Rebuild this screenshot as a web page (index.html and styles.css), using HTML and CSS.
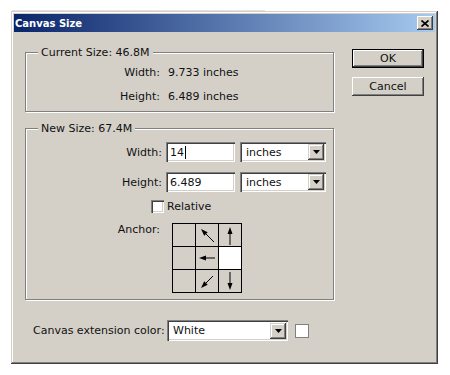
FILE: index.html
```html
<!DOCTYPE html>
<html>
<head>
<meta charset="UTF-8">
<title>Canvas Size</title>
<link rel="stylesheet" href="styles.css">
</head>
<body>
<div class="scrap-line"></div>
<div class="window">
    <div class="title-bar">
        <span class="title">Canvas Size</span>
        <span class="close-btn">
            <svg width="8" height="7" viewBox="0 0 8 7"><path d="M0.5 0.5 L7.5 6.5 M7.5 0.5 L0.5 6.5" stroke="#000" stroke-width="1.7" fill="none"/></svg>
        </span>
    </div>
    <div class="dialog-body">
        <div class="main-col">
            <fieldset class="group current">
                <legend>Current Size: 46.8M</legend>
                <div class="info-row"><span class="lbl">Width:</span><span class="val">9.733 inches</span></div>
                <div class="info-row"><span class="lbl">Height:</span><span class="val">6.489 inches</span></div>
            </fieldset>
            <fieldset class="group new-size">
                <legend>New Size: 67.4M</legend>
                <div class="field-row">
                    <span class="lbl">Width:</span>
                    <div class="textbox">14<span class="caret"></span></div>
                    <div class="combo"><span class="combo-text">inches</span><span class="drop-btn"><svg width="7" height="4" viewBox="0 0 7 4"><polygon points="0,0 7,0 3.5,4" fill="#000"/></svg></span></div>
                </div>
                <div class="field-row">
                    <span class="lbl">Height:</span>
                    <div class="textbox">6.489</div>
                    <div class="combo"><span class="combo-text">inches</span><span class="drop-btn"><svg width="7" height="4" viewBox="0 0 7 4"><polygon points="0,0 7,0 3.5,4" fill="#000"/></svg></span></div>
                </div>
                <div class="check-row"><span class="checkbox"></span><span>Relative</span></div>
                <div class="anchor-row">
                    <span class="lbl">Anchor:</span>
                    <div class="anchor-grid">
                        <div class="cell"></div>
                        <div class="cell"><svg width="22" height="22" viewBox="0 0 22 22"><line x1="18" y1="18" x2="9" y2="9" stroke="#000"/><polygon points="5,5 11.7,8.2 8.2,11.7" fill="#000"/></svg></div>
                        <div class="cell"><svg width="22" height="22" viewBox="0 0 22 22"><line x1="11" y1="21" x2="11" y2="9" stroke="#000"/><polygon points="11,3 8.5,10 13.5,10" fill="#000"/></svg></div>
                        <div class="cell"></div>
                        <div class="cell"><svg width="22" height="22" viewBox="0 0 22 22"><line x1="19" y1="11" x2="9" y2="11" stroke="#000"/><polygon points="3,11 10,8.5 10,13.5" fill="#000"/></svg></div>
                        <div class="cell on"></div>
                        <div class="cell"></div>
                        <div class="cell"><svg width="22" height="22" viewBox="0 0 22 22"><line x1="17" y1="6" x2="9" y2="14" stroke="#000"/><polygon points="5,18 11.7,14.8 8.2,11.3" fill="#000"/></svg></div>
                        <div class="cell"><svg width="22" height="22" viewBox="0 0 22 22"><line x1="11" y1="2" x2="11" y2="14" stroke="#000"/><polygon points="11,20 8.5,13 13.5,13" fill="#000"/></svg></div>
                    </div>
                </div>
            </fieldset>
            <div class="ext-row">
                <span class="ext-label">Canvas extension color:</span>
                <div class="combo wide"><span class="combo-text">White</span><span class="drop-btn"><svg width="7" height="4" viewBox="0 0 7 4"><polygon points="0,0 7,0 3.5,4" fill="#000"/></svg></span></div>
                <span class="swatch"></span>
            </div>
        </div>
        <div class="btn-col">
            <button class="btn default">OK</button>
            <button class="btn">Cancel</button>
        </div>
    </div>
</div>
</body>
</html>
```

FILE: styles.css
```css
body {
    margin: 0;
    padding-top: 10px;
    background-color: #fff;
    font-family: "DejaVu Sans", sans-serif;
    font-size: 11px;
    color: #111;
}
.scrap-line {
    margin-left: 12px;
    width: 253px;
    height: 1px;
    background-color: #e2e2e2;
}
.window {
    margin-left: 11px;
    width: 427px;
    height: 353px;
    box-sizing: border-box;
    padding: 3px;
    background-color: #d4d0c8;
    box-shadow: inset -1px -1px #404040, inset 1px 1px #d4d0c8, inset -2px -2px #808080, inset 2px 2px #fff;
}
.title-bar {
    height: 18px;
    display: flex;
    align-items: center;
    padding-left: 1px;
    background: linear-gradient(to right, #0a246a, #a6caf0);
}
.title {
    color: #fff;
    font-weight: bold;
    font-size: 10px;
}
.close-btn {
    margin-left: auto;
    margin-right: 2px;
    width: 16px;
    height: 14px;
    display: flex;
    align-items: center;
    justify-content: center;
    background-color: #d4d0c8;
    box-shadow: inset -1px -1px #404040, inset 1px 1px #fff, inset -2px -2px #808080;
}
.dialog-body {
    display: flex;
    gap: 18px;
    padding: 14px 11px 0 11px;
}
.main-col {
    width: 309px;
}
.btn-col {
    width: 72px;
    padding-top: 3px;
    display: flex;
    flex-direction: column;
    gap: 9px;
}
.btn {
    height: 19px;
    padding: 0;
    border: none;
    font: inherit;
    color: #111;
    background-color: #d4d0c8;
    box-shadow: inset -1px -1px #404040, inset 1px 1px #fff, inset -2px -2px #808080;
}
.btn.default {
    box-shadow: inset 0 0 0 1px #000, inset -2px -2px #404040, inset 2px 2px #fff, inset -3px -3px #808080;
}

/* group boxes */
.group {
    margin: 0;
    padding: 1px 0 3px 12px;
    min-width: 0;
    border: 1px solid #808080;
    box-shadow: inset 1px 1px #fff, 1px 1px #fff;
}
.group legend {
    padding: 0 3px;
    line-height: 13px;
    background-color: #d4d0c8;
}
.new-size {
    margin-top: 10px;
    padding-top: 7px;
    padding-bottom: 6px;
}
.info-row {
    display: flex;
    align-items: center;
    height: 24px;
}
.info-row .lbl {
    width: 122px;
    text-align: right;
}
.info-row .val {
    margin-left: 8px;
}
.field-row {
    display: flex;
    align-items: center;
    height: 20px;
}
.field-row + .field-row {
    margin-top: 10px;
}
.field-row .lbl {
    width: 124px;
    text-align: right;
}

/* sunken controls */
.textbox, .combo, .checkbox {
    box-sizing: border-box;
    background-color: #fff;
    box-shadow: inset 1px 1px #808080, inset 2px 2px #404040, inset -1px -1px #fff, inset -2px -2px #d4d0c8;
}
.textbox {
    margin-left: 4px;
    width: 69px;
    height: 20px;
    padding-left: 4px;
    display: flex;
    align-items: center;
}
.caret {
    display: inline-block;
    width: 1px;
    height: 13px;
    margin-left: 1px;
    background-color: #000;
}
.combo {
    margin-left: 5px;
    width: 86px;
    height: 20px;
    padding: 2px 2px 2px 6px;
    display: flex;
    align-items: center;
}
.combo-text {
    flex: 1;
}
.drop-btn {
    width: 16px;
    height: 16px;
    display: flex;
    align-items: center;
    justify-content: center;
    background-color: #d4d0c8;
    box-shadow: inset -1px -1px #404040, inset 1px 1px #d4d0c8, inset -2px -2px #808080, inset 2px 2px #fff;
}
.check-row {
    display: flex;
    align-items: center;
    gap: 3px;
    height: 13px;
    margin-top: 8px;
    margin-left: 113px;
}
.checkbox {
    width: 13px;
    height: 13px;
}
.anchor-row {
    display: flex;
    align-items: flex-start;
    margin-top: 10px;
}
.anchor-row .lbl {
    width: 122px;
    text-align: right;
    line-height: 14px;
}
.anchor-grid {
    margin-left: 12px;
    display: grid;
    grid-template-columns: repeat(3, 22px);
    grid-auto-rows: 22px;
    gap: 1px;
    padding: 1px;
    background-color: #000;
}
.cell {
    background-color: #d4d0c8;
}
.cell svg {
    display: block;
}
.cell.on {
    background-color: #fff;
}

/* bottom row */
.ext-row {
    display: flex;
    align-items: center;
    margin-top: 20px;
    margin-left: 8px;
}
.ext-label {
    width: 134px;
}
.combo.wide {
    margin-left: 0;
    width: 121px;
    height: 21px;
}
.swatch {
    margin-left: 7px;
    width: 14px;
    height: 14px;
    box-sizing: border-box;
    border: 1px solid #808080;
    background-color: #fff;
}
```
